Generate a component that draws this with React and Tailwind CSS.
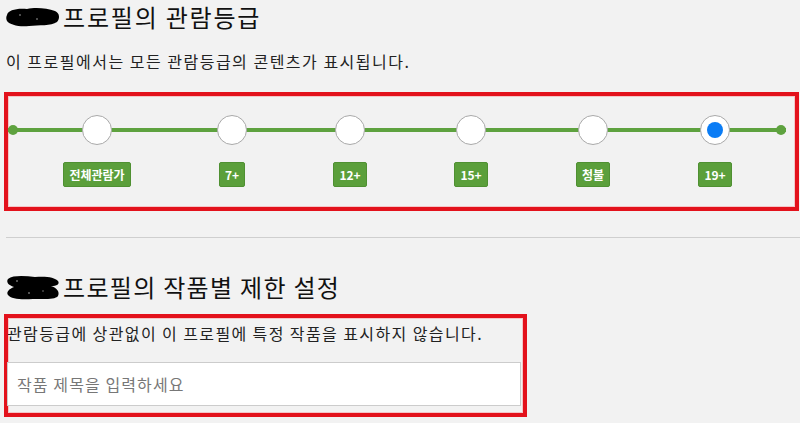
import React from "react";

const FONT = { fontFamily: '"Noto Sans CJK KR", "Noto Sans", sans-serif' };

const ratings = [
  { label: "전체관람가", width: "w-[134px]" },
  { label: "7+", width: "w-[136px]" },
  { label: "12+", width: "w-[100px]" },
  { label: "15+", width: "w-[142px]" },
  { label: "청불", width: "w-[102px]" },
  { label: "19+", width: "w-[142px]", selected: true },
];

// scribbled-out profile name
function Scribble({ tall }) {
  return (
    <svg width="56" height={tall ? 28 : 24} viewBox={tall ? "0 0 56 28" : "0 0 56 24"} className="shrink-0">
      {tall ? (
        <g fill="#000">
          <path d="M3 6 C8 2 20 3 30 4 C40 3 50 4 53 8 C55 11 52 13 46 13 C52 15 55 19 53 23 C50 27 38 26 28 26 C16 27 6 26 3 22 C1 19 4 16 9 14 C3 12 1 9 3 6 Z" />
          <circle cx="12" cy="8" r="0.8" fill="#bbb" />
          <circle cx="24" cy="20" r="0.8" fill="#bbb" />
          <circle cx="38" cy="18" r="0.7" fill="#999" />
        </g>
      ) : (
        <g fill="#000">
          <path d="M2 10 C3 5 12 3 22 4 C30 2 42 3 50 6 C55 8 55 14 52 17 C46 21 34 20 24 21 C14 22 5 20 2 16 C1 14 1 12 2 10 Z" />
          <circle cx="15" cy="10" r="0.8" fill="#aaa" />
          <circle cx="32" cy="14" r="0.8" fill="#aaa" />
        </g>
      )}
    </svg>
  );
}

function RatingStep({ label, width, selected }) {
  return (
    <div className={`${width} flex flex-col items-center`}>
      <div className="w-[30px] h-[30px] rounded-full bg-white border border-[#a9a9a9] flex items-center justify-center relative z-10">
        {selected && <div className="w-[16px] h-[16px] rounded-full bg-[#0a7cf5]" />}
      </div>
      <div className="mt-[17px] h-[25px] px-[5px] flex items-center rounded-[2px] bg-[#5b9f3b] border border-[#4f9032] text-white text-[12px] font-bold">
        {label}
      </div>
    </div>
  );
}

export default function App() {
  return (
    <div className="w-[800px] h-[423px] bg-[#f2f2f2] text-[#222] overflow-hidden" style={FONT}>
      <div className="flex items-center h-[34px] pl-[5px] gap-[2px]">
        <Scribble />
        <h1 className="text-[24px] leading-[34px] tracking-[1.8px] text-[#111]">프로필의 관람등급</h1>
      </div>
      <p className="mt-[15px] pl-[6px] text-[16px] leading-[24px] tracking-[1.5px]">
        이 프로필에서는 모든 관람등급의 콘텐츠가 표시됩니다.
      </p>

      <div className="mt-[19px] ml-[4px] w-[795px] border-4 border-[#e3121c] shadow-[inset_0_0_0_1px_#f4c6c8]">
        <div className="relative pt-[19px] pb-[20px]">
          <div className="absolute left-[0px] right-[9px] top-[32px] h-[4px] bg-[#5ea23f]" />
          <div className="absolute left-[0px] top-[29px] w-[10px] h-[10px] rounded-full bg-[#5ea23f]" />
          <div className="absolute right-[9px] top-[29px] w-[10px] h-[10px] rounded-full bg-[#5ea23f]" />
          <div className="flex pl-[22px]">
            {ratings.map((r) => (
              <RatingStep key={r.label} {...r} />
            ))}
          </div>
        </div>
      </div>

      <div className="mt-[26px] ml-[6px] h-px bg-[#cfcfcf]" />

      <div className="mt-[32px] flex items-center h-[34px] pl-[5px] gap-[2px]">
        <Scribble tall />
        <h2 className="text-[24px] leading-[34px] tracking-[1.3px] text-[#111]">프로필의 작품별 제한 설정</h2>
      </div>

      <div className="mt-[10px] ml-[4px] w-[523px] border-4 border-[#e3121c] shadow-[inset_0_0_0_1px_#f4c6c8] pt-[3px] pb-[7px]">
        <p className="-ml-[1px] text-[16px] leading-[24px] tracking-[1.4px]">
          관람등급에 상관없이 이 프로필에 특정 작품을 표시하지 않습니다.
        </p>
        <input
          className="mt-[17px] -ml-[1px] w-[514px] h-[44px] bg-white border border-[#cccccc] pl-[9px] text-[16px] tracking-[1.1px] outline-none placeholder:text-[#777]"
          placeholder="작품 제목을 입력하세요"
          style={FONT}
        />
      </div>
    </div>
  );
}
